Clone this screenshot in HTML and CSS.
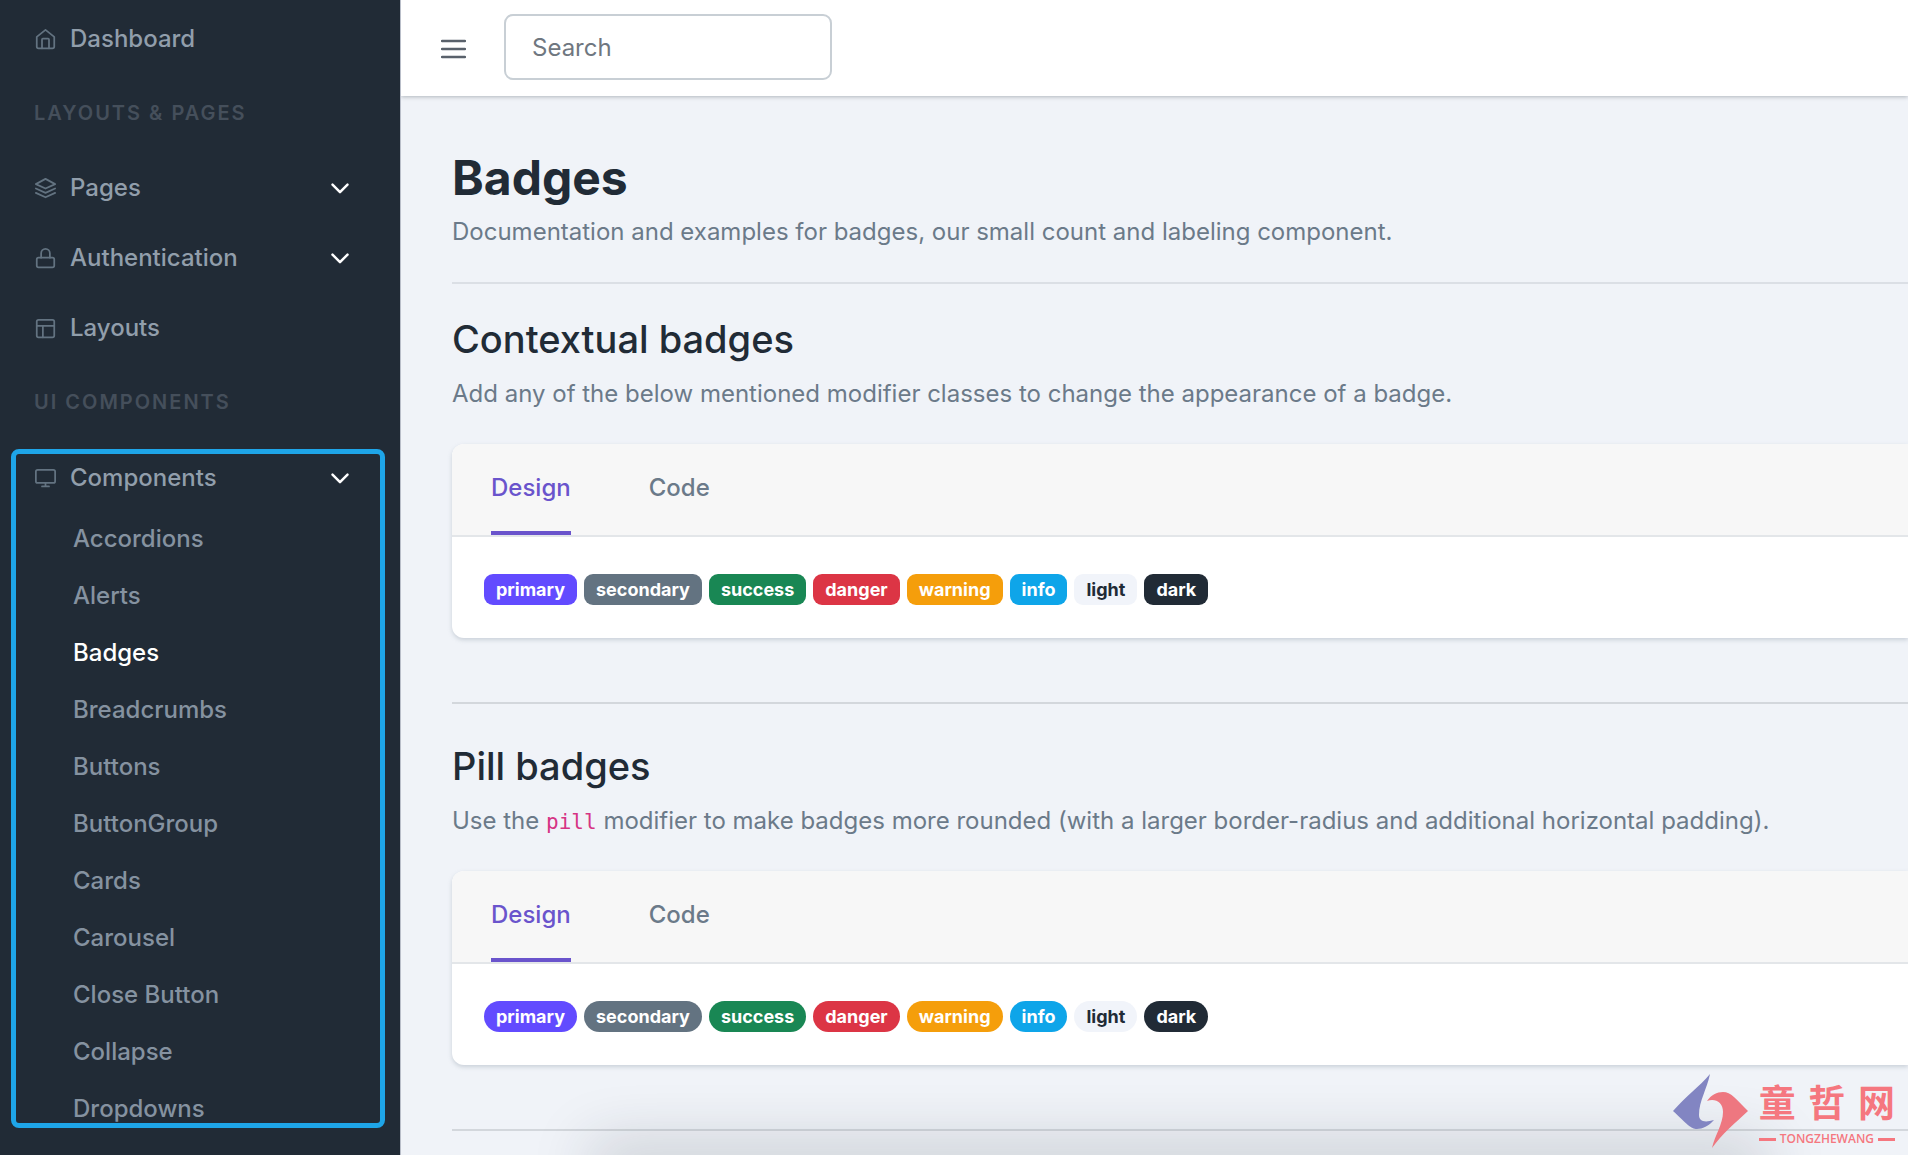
FILE: index.html
```html
<!DOCTYPE html>
<html lang="en">
<head>
    <meta charset="UTF-8">
    <title>Badges</title>
    <link rel="stylesheet" href="styles.css">
</head>
<body>
<div class="wrapper">
    <nav class="sidebar">
        <a class="nav-item" href="#">
            <svg class="icon" viewBox="0 0 24 24"><path d="M2 9l10-8 10 8v11a2 2 0 0 1-2 2H4a2 2 0 0 1-2-2z"/><path d="M8 22V12a1 1 0 0 1 1-1h6a1 1 0 0 1 1 1v10"/></svg>
            Dashboard
        </a>
        <div class="nav-title">Layouts &amp; Pages</div>
        <a class="nav-item" href="#">
            <svg class="icon" viewBox="0 0 24 24"><path d="M12 1L1 7l11 5 11-5z"/><path d="M1 17l11 5 11-5"/><path d="M1 12l11 5 11-5"/></svg>
            Pages
            <svg class="arrow" viewBox="0 0 24 24"><path d="M3 8l9 9 9-9"/></svg>
        </a>
        <a class="nav-item" href="#">
            <svg class="icon" viewBox="0 0 24 24"><rect x="2" y="11" width="20" height="11" rx="2"/><path d="M7 11V6a5 5 0 0 1 10 0v5"/></svg>
            Authentication
            <svg class="arrow" viewBox="0 0 24 24"><path d="M3 8l9 9 9-9"/></svg>
        </a>
        <a class="nav-item" href="#">
            <svg class="icon" viewBox="0 0 24 24"><rect x="2" y="2" width="20" height="20" rx="2"/><path d="M2 9h20M9 22V9"/></svg>
            Layouts
        </a>
        <div class="nav-title">UI Components</div>
        <div class="nav-group">
            <a class="nav-item" href="#">
                <svg class="icon" viewBox="0 0 24 24"><rect x="1" y="2" width="22" height="15" rx="2"/><path d="M8 21h8M12 17v4"/></svg>
                Components
                <svg class="arrow" viewBox="0 0 24 24"><path d="M3 8l9 9 9-9"/></svg>
            </a>
            <ul class="sub-nav">
                <li><a href="#">Accordions</a></li>
                <li><a href="#">Alerts</a></li>
                <li><a class="active" href="#">Badges</a></li>
                <li><a href="#">Breadcrumbs</a></li>
                <li><a href="#">Buttons</a></li>
                <li><a href="#">ButtonGroup</a></li>
                <li><a href="#">Cards</a></li>
                <li><a href="#">Carousel</a></li>
                <li><a href="#">Close Button</a></li>
                <li><a href="#">Collapse</a></li>
                <li><a href="#">Dropdowns</a></li>
            </ul>
        </div>
    </nav>
    <div class="page">
        <header class="header">
            <button class="toggle" type="button" aria-label="Toggle menu">
                <svg viewBox="0 0 25 20"><path d="M1 2h23M1 10h23M1 18h23"/></svg>
            </button>
            <input class="search" type="search" placeholder="Search" aria-label="Search">
        </header>
        <main class="content">
            <h1>Badges</h1>
            <p>Documentation and examples for badges, our small count and labeling component.</p>
            <hr>
            <section>
                <h2>Contextual badges</h2>
                <p>Add any of the below mentioned modifier classes to change the appearance of a badge.</p>
                <div class="card">
                    <div class="tabs">
                        <button class="tab active" type="button">Design</button>
                        <button class="tab" type="button">Code</button>
                    </div>
                    <div class="card-body">
                        <span class="badge primary">primary</span>
                        <span class="badge secondary">secondary</span>
                        <span class="badge success">success</span>
                        <span class="badge danger">danger</span>
                        <span class="badge warning">warning</span>
                        <span class="badge info">info</span>
                        <span class="badge light">light</span>
                        <span class="badge dark">dark</span>
                    </div>
                </div>
            </section>
            <hr class="divider">
            <section>
                <h2>Pill badges</h2>
                <p>Use the <code>pill</code> modifier to make badges more rounded (with a larger border-radius and additional horizontal padding).</p>
                <div class="card">
                    <div class="tabs">
                        <button class="tab active" type="button">Design</button>
                        <button class="tab" type="button">Code</button>
                    </div>
                    <div class="card-body pills">
                        <span class="badge primary">primary</span>
                        <span class="badge secondary">secondary</span>
                        <span class="badge success">success</span>
                        <span class="badge danger">danger</span>
                        <span class="badge warning">warning</span>
                        <span class="badge info">info</span>
                        <span class="badge light">light</span>
                        <span class="badge dark">dark</span>
                    </div>
                </div>
            </section>
            <hr class="divider">
        </main>
        <div class="bottom-shadow"></div>
    </div>
</div>
<div class="watermark">
    <svg class="mark" viewBox="0 0 76 76">
        <path fill="#8285c2" d="M37 1C34 16 26 28 26 42c0 6 5 8 15 5-5 6-12 9-17 9-6 0-10-5-24-18C12 24 27 13 37 1z"/>
        <path fill="#ee7780" d="M39 75c3-13 11-24 11-36 0-10-8-14-16-11 4-6 10-9 16-9 8 0 13 7 25 19C62 50 49 61 39 75z"/>
    </svg>
    <div class="brand">
        <div class="brand-name"><span>童</span><span>哲</span><span>网</span></div>
        <div class="brand-sub">TONGZHEWANG</div>
    </div>
</div>
</body>
</html>
```
FILE: styles.css
```css
* {
    box-sizing: border-box;
    margin: 0;
    padding: 0;
}

body {
    font-family: Inter, "Noto Sans", sans-serif;
    font-size: 24px;
    line-height: 36px;
    color: #6b7a89;
    background-color: #f0f3f8;
}

a {
    color: inherit;
    text-decoration: none;
}

button,
input {
    font: inherit;
    color: inherit;
}

.wrapper {
    display: flex;
    height: 100vh;
    overflow: hidden;
}

/* sidebar */
.sidebar {
    flex: 0 0 401px;
    padding: 4px 0 0 11px;
    color: #919eab;
    background-color: #212b36;
    border-right: 1px solid #b9bec9;
    font-weight: 500;
}

.nav-item {
    display: flex;
    align-items: center;
    height: 70px;
    padding: 0 50px 0 24px;
}

.icon {
    width: 21px;
    height: 21px;
    margin-right: 14px;
    fill: none;
    stroke: #637381;
    stroke-width: 2;
    stroke-linecap: round;
    stroke-linejoin: round;
}

.arrow {
    width: 20px;
    height: 20px;
    margin-left: auto;
    fill: none;
    stroke: #fff;
    stroke-width: 3;
    stroke-linecap: round;
    stroke-linejoin: round;
}

.nav-title {
    padding: 21px 23px 22px;
    color: #454f5b;
    font-size: 20px;
    font-weight: 600;
    letter-spacing: 2px;
    text-transform: uppercase;
}

.nav-group {
    width: 374px;
    margin-top: 7px;
    border: 5px solid #1ea5e8;
    border-radius: 8px;
}

.nav-group .nav-item {
    height: 48px;
    padding: 0 30px 0 19px;
}

.sub-nav {
    display: flex;
    flex-direction: column;
    gap: 28px;
    padding: 22px 0 0 57px;
    list-style: none;
    line-height: 29px;
    color: #8592a0;
}

.sub-nav .active {
    color: #fff;
}

/* top bar */
.page {
    position: relative;
    flex: 1;
    min-width: 0;
    overflow: hidden;
}

.header {
    position: relative;
    display: flex;
    align-items: center;
    height: 96px;
    padding: 0 40px 2px;
    background-color: #fff;
    box-shadow: 0 1px 4px rgba(33, 43, 54, .3);
}

.toggle {
    width: 25px;
    margin-right: 38px;
    padding-top: 4px;
    border: 0;
    background: none;
    cursor: pointer;
}

.toggle svg {
    display: block;
    width: 25px;
    fill: none;
    stroke: #59616b;
    stroke-width: 2.5;
    stroke-linecap: round;
}

.search {
    width: 328px;
    height: 66px;
    padding: 0 26px;
    border: 2px solid #c8cfd5;
    border-radius: 9px;
    background: none;
    appearance: none;
}

.search::placeholder {
    color: #6f7780;
    opacity: 1;
}

/* content */
.content {
    padding: 50px 0 0 51px;
}

h1 {
    margin-bottom: 4px;
    color: #212b36;
    font-size: 48px;
    line-height: 64px;
}

h2 {
    margin-bottom: 12px;
    color: #212b36;
    font-size: 38px;
    font-weight: 500;
    line-height: 50px;
}

hr {
    margin: 32px 0 30px;
    border: 0;
    border-top: 2px solid #dbdfe5;
}

.divider {
    margin-bottom: 37px;
    border-color: #d3d7dc;
}

code {
    color: #d63384;
    font-family: "DejaVu Sans Mono", monospace;
    font-size: 21px;
    line-height: 1;
}

.card {
    margin: 32px 0 64px;
    border-radius: 12px 0 0 12px;
    background-color: #fff;
    box-shadow: 0 2px 4px rgba(145, 158, 171, .4);
    overflow: hidden;
}

.tabs {
    display: flex;
    gap: 78px;
    padding: 0 39px;
    border-bottom: 2px solid #e3e6e9;
    background-color: #f7f7f7;
}

.tab {
    padding: 26px 0 25px;
    border: 0;
    border-bottom: 4px solid transparent;
    background: none;
    font-weight: 500;
    cursor: pointer;
}

.tab.active {
    color: #6a54cc;
    border-bottom-color: #6a54cc;
}

.card-body {
    display: flex;
    flex-wrap: wrap;
    gap: 7px;
    padding: 37px 32px 33px;
}

.badge {
    padding: 0 12px;
    border-radius: 9px;
    color: #fff;
    font-size: 18px;
    font-weight: 700;
    line-height: 31px;
}

.pills .badge {
    border-radius: 16px;
}

.primary { background-color: #624bff; }
.secondary { background-color: #637381; }
.success { background-color: #198754; }
.danger { background-color: #dc3545; }
.warning { background-color: #f59e0b; }
.info { background-color: #0ea5e9; }
.light { color: #212b36; background-color: #f1f4fa; }
.dark { background-color: #212b36; }

/* soft shade along the bottom edge */
.bottom-shadow {
    position: absolute;
    right: 150px;
    bottom: -20px;
    left: 200px;
    height: 20px;
    box-shadow: 0 0 60px 10px rgba(33, 43, 54, .22);
}

/* watermark */
.watermark {
    position: absolute;
    right: 13px;
    bottom: 6px;
    display: flex;
    gap: 10px;
    color: #f5777f;
}

.mark {
    width: 76px;
    height: 76px;
}

.brand-name {
    display: flex;
    justify-content: space-between;
    font-family: "Noto Sans CJK SC", sans-serif;
    font-size: 37px;
    font-weight: 700;
    line-height: 56px;
}

.brand-sub {
    display: flex;
    align-items: center;
    gap: 4px;
    padding-top: 2px;
    font-family: "Open Sans", sans-serif;
    font-size: 12px;
    font-weight: 600;
    line-height: 16px;
}

.brand-sub::before,
.brand-sub::after {
    content: "";
    width: 17px;
    height: 3px;
    background-color: currentColor;
}
```
